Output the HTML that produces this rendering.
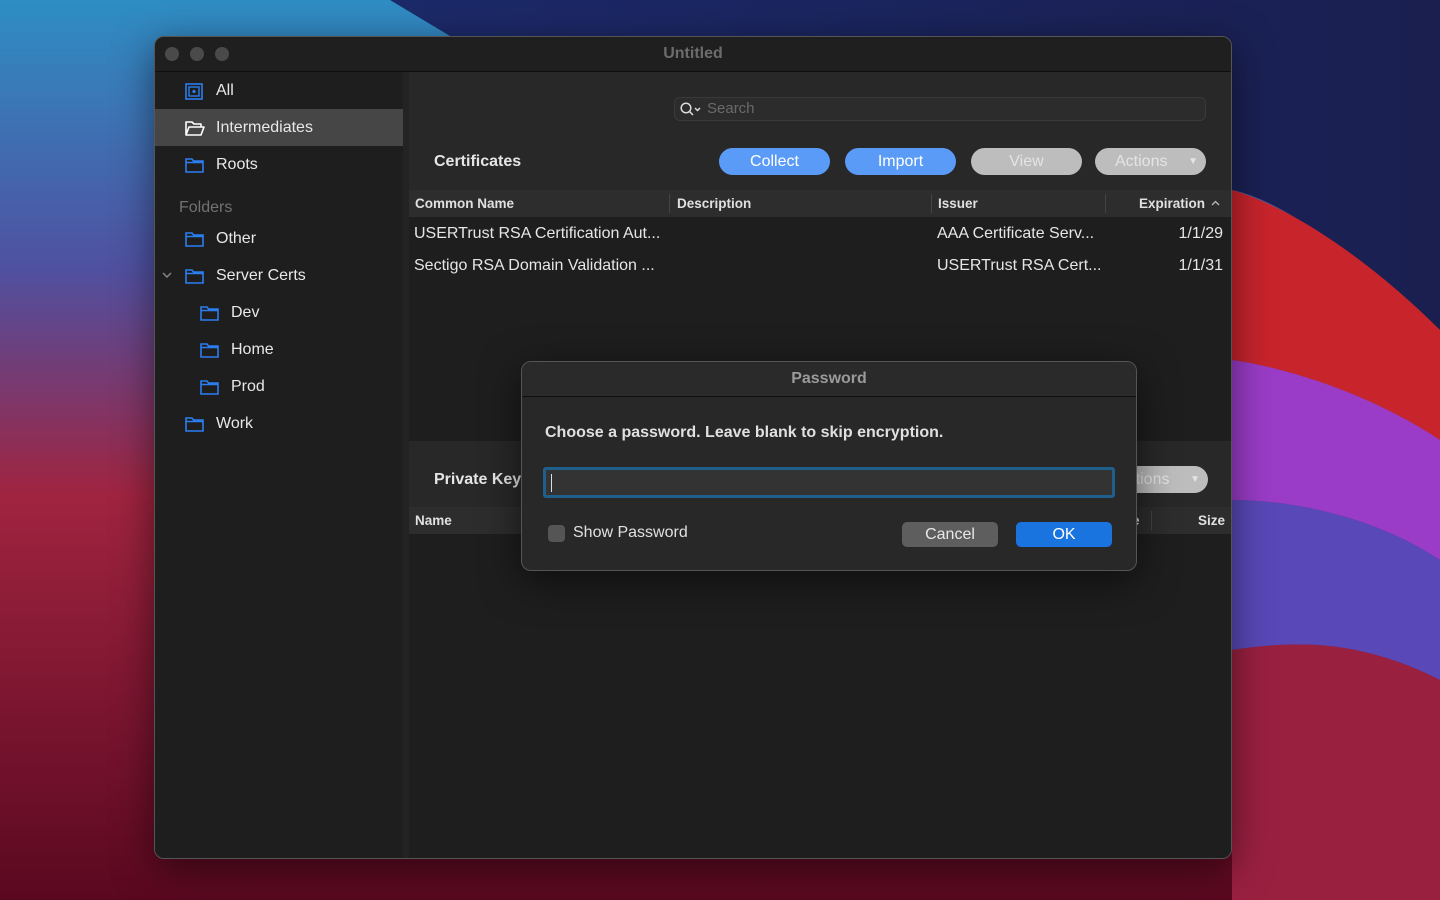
<!DOCTYPE html>
<html><head><meta charset="utf-8"><style>
*{box-sizing:border-box;margin:0;padding:0}
body{width:1440px;height:900px;overflow:hidden;position:relative;font-family:"Liberation Sans",sans-serif;background:#5a1030}
.bg{position:absolute;left:0;top:0}
.win{position:absolute;left:154px;top:36px;width:1078px;height:823px;border-radius:10px;overflow:hidden;background:#262626;border:1px solid #555;box-shadow:0 10px 40px rgba(0,0,0,.5)}
.title{position:absolute;left:0;top:0;width:100%;height:35px;background:#1f1f1f;border-bottom:1px solid #0e0e0e;text-align:center;color:#6c6c6c;font-weight:bold;font-size:16px;line-height:34px}
.dot{position:absolute;top:10px;width:14px;height:14px;border-radius:50%;background:#4a4a4a}
.side{position:absolute;left:0;top:35px;width:248px;bottom:0;background:#1e1e1e}
.item{position:absolute;left:0;width:248px;height:37px;color:#e8e8e8;font-size:16px;line-height:37px}
.item svg{position:absolute;top:11px}
.sel{background:#464646}
.main{position:absolute;left:248px;top:35px;right:0;bottom:0;background:#282828;border-left:6px solid #232323}
.tbl{position:absolute;left:0;right:0;background:#1e1e1e}
.hdr{position:absolute;left:0;right:0;height:27px;background:#2d2d2d;color:#e0e0e0;font-size:13.5px;font-weight:bold;line-height:27px}
.hdr span{position:absolute;top:0}
.sep{position:absolute;top:4px;width:1px;height:19px;background:#444}
.row{position:absolute;color:#e6e6e6;font-size:16px}
.btn{position:absolute;height:27px;border-radius:14px;text-align:center;font-size:16px;line-height:27px}
.blue{background:#5b9bf8;color:#fff}
.gray{background:#bdbdbd;color:#e4e4e4}
.dlg{position:absolute;left:521px;top:361px;width:616px;height:210px;background:#282828;border:1px solid #555;border-radius:10px;box-shadow:0 10px 40px rgba(0,0,0,.55);overflow:hidden}
.dt{height:35px;border-bottom:1px solid #0f0f0f;background:#2a2a2a;text-align:center;color:#9a9a9a;font-weight:bold;font-size:16px;line-height:33px}
</style></head><body>
<svg class="bg" width="1440" height="900" viewBox="0 0 1440 900">
<defs>
<linearGradient id="l" x1="0" y1="0" x2="0" y2="1"><stop offset="0" stop-color="#2e8ec4"/><stop offset=".3" stop-color="#5050a0"/><stop offset=".55" stop-color="#a02440"/><stop offset="1" stop-color="#5a0820"/></linearGradient>
<linearGradient id="t" x1="0" y1="0" x2="1" y2="0"><stop offset="0" stop-color="#1c2a6a"/><stop offset="1" stop-color="#1a1f50"/></linearGradient>
</defs>
<rect width="1440" height="900" fill="url(#l)"/>
<path d="M390 0 L1440 0 L1440 330 C1350 250 1280 200 1232 190 L450 36Z" fill="url(#t)"/>
<path d="M1232 190 C1300 210 1380 270 1440 330 L1440 440 C1380 400 1300 370 1232 360Z" fill="#c8242c"/>
<path d="M1232 360 C1300 370 1380 400 1440 440 L1440 560 C1380 520 1300 500 1232 500Z" fill="#9a3cc8"/>
<path d="M1232 500 C1300 500 1380 520 1440 560 L1440 680 C1360 640 1300 640 1232 650Z" fill="#5848b8"/>
<path d="M1232 650 C1300 640 1360 640 1440 680 L1440 900 L1232 900Z" fill="#9a2040"/>
</svg>
<div class="win">
 <div class="title">Untitled
  <div class="dot" style="left:10px"></div><div class="dot" style="left:35px"></div><div class="dot" style="left:60px"></div>
 </div>
 <div class="side">
  <div class="item" style="top:0"><svg style="left:30px" width="18" height="17" viewBox="0 0 18 17"><rect x="1" y="1" width="16" height="15" fill="none" stroke="#2a7ef0" stroke-width="1.6"/><rect x="4" y="4" width="10" height="9" fill="none" stroke="#2a7ef0" stroke-width="1.4"/><circle cx="9" cy="8.5" r="1.6" fill="#2a7ef0"/></svg><span style="position:absolute;left:61px">All</span></div>
  <div class="item sel" style="top:37px"><svg style="left:30px" width="20" height="17" viewBox="0 0 20 17"><path d="M1 15V2h6l2 2h7v3M1 15l3-8h15l-3 8Z" fill="none" stroke="#fff" stroke-width="1.6" stroke-linejoin="round"/></svg><span style="position:absolute;left:61px">Intermediates</span></div>
  <div class="item" style="top:74px"><svg style="left:30px" width="19" height="16" viewBox="0 0 19 16"><path d="M1 2h6l1.5 2H18v11H1Z M1 5.5h17" fill="none" stroke="#2a7ef0" stroke-width="1.6"/></svg><span style="position:absolute;left:61px">Roots</span></div>
  <div class="item" style="top:117px;color:#727272"><span style="position:absolute;left:24px">Folders</span></div>
  <div class="item" style="top:148px"><svg style="left:30px" width="19" height="16" viewBox="0 0 19 16"><path d="M1 2h6l1.5 2H18v11H1Z M1 5.5h17" fill="none" stroke="#2a7ef0" stroke-width="1.6"/></svg><span style="position:absolute;left:61px">Other</span></div>
  <div class="item" style="top:185px"><svg style="position:absolute;left:7px;top:15px" width="10" height="7" viewBox="0 0 10 7"><path d="M1 1l4 4 4-4" fill="none" stroke="#8a8a8a" stroke-width="1.4"/></svg><svg style="left:30px" width="19" height="16" viewBox="0 0 19 16"><path d="M1 2h6l1.5 2H18v11H1Z M1 5.5h17" fill="none" stroke="#2a7ef0" stroke-width="1.6"/></svg><span style="position:absolute;left:61px">Server Certs</span></div>
  <div class="item" style="top:222px"><svg style="left:45px" width="19" height="16" viewBox="0 0 19 16"><path d="M1 2h6l1.5 2H18v11H1Z M1 5.5h17" fill="none" stroke="#2a7ef0" stroke-width="1.6"/></svg><span style="position:absolute;left:76px">Dev</span></div>
  <div class="item" style="top:259px"><svg style="left:45px" width="19" height="16" viewBox="0 0 19 16"><path d="M1 2h6l1.5 2H18v11H1Z M1 5.5h17" fill="none" stroke="#2a7ef0" stroke-width="1.6"/></svg><span style="position:absolute;left:76px">Home</span></div>
  <div class="item" style="top:296px"><svg style="left:45px" width="19" height="16" viewBox="0 0 19 16"><path d="M1 2h6l1.5 2H18v11H1Z M1 5.5h17" fill="none" stroke="#2a7ef0" stroke-width="1.6"/></svg><span style="position:absolute;left:76px">Prod</span></div>
  <div class="item" style="top:333px"><svg style="left:30px" width="19" height="16" viewBox="0 0 19 16"><path d="M1 2h6l1.5 2H18v11H1Z M1 5.5h17" fill="none" stroke="#2a7ef0" stroke-width="1.6"/></svg><span style="position:absolute;left:61px">Work</span></div>
 </div>
 <div class="main">
  <div style="position:absolute;left:265px;top:25px;width:532px;height:24px;border:1px solid #3a3a3a;border-radius:6px;background:#2c2c2c;color:#6a6a6a;font-size:15px;line-height:22px;padding-left:32px">
   <svg style="position:absolute;left:5px;top:4px" width="22" height="15" viewBox="0 0 22 15"><circle cx="6" cy="6" r="4.8" fill="none" stroke="#ddd" stroke-width="1.5"/><path d="M9.5 9.5L13 13M15 6l2.5 2.5L20 6" fill="none" stroke="#ddd" stroke-width="1.5"/></svg>Search</div>
  <div style="position:absolute;left:25px;top:80px;color:#e6e6e6;font-weight:bold;font-size:16px;line-height:20px">Certificates</div>
  <div class="btn blue" style="left:310px;top:76px;width:111px">Collect</div>
  <div class="btn blue" style="left:436px;top:76px;width:111px">Import</div>
  <div class="btn gray" style="left:562px;top:76px;width:111px">View</div>
  <div class="btn gray" style="left:686px;top:76px;width:111px;text-align:left;padding-left:20px">Actions<span style="position:absolute;right:8px;top:0;font-size:10px">&#9660;</span></div>
  <div class="tbl" style="top:145px;height:224px"></div>
  <div class="hdr" style="top:118px">
   <span style="left:6px">Common Name</span><div class="sep" style="left:260px"></div>
   <span style="left:268px">Description</span><div class="sep" style="left:522px"></div>
   <span style="left:529px">Issuer</span><div class="sep" style="left:696px"></div>
   <span style="right:26px">Expiration</span><svg style="position:absolute;right:11px;top:10px" width="9" height="6" viewBox="0 0 9 6"><path d="M1 5l3.5-3.5L8 5" fill="none" stroke="#bbb" stroke-width="1.3"/></svg>
  </div>
  <div class="row" style="left:5px;top:153px">USERTrust RSA Certification Aut...</div>
  <div class="row" style="left:528px;top:153px">AAA Certificate Serv...</div>
  <div class="row" style="right:8px;top:153px">1/1/29</div>
  <div class="row" style="left:5px;top:185px">Sectigo RSA Domain Validation ...</div>
  <div class="row" style="left:528px;top:185px">USERTrust RSA Cert...</div>
  <div class="row" style="right:8px;top:185px">1/1/31</div>
  <div style="position:absolute;left:25px;top:398px;color:#e6e6e6;font-weight:bold;font-size:16px;line-height:20px">Private Keys</div>
  <div class="btn gray" style="left:688px;top:394px;width:111px;text-align:left;padding-left:20px">Actions<span style="position:absolute;right:8px;top:0;font-size:10px">&#9660;</span></div>
  <div class="tbl" style="top:462px;bottom:0"></div>
  <div class="hdr" style="top:435px"><span style="left:6px">Name</span><span style="left:700px">Type</span><div class="sep" style="left:742px"></div><span style="right:6px">Size</span></div>
 </div>
</div>
<div class="dlg">
 <div class="dt">Password</div>
 <div style="position:absolute;left:23px;top:62px;color:#e0e0e0;font-weight:bold;font-size:16px">Choose a password. Leave blank to skip encryption.</div>
 <div style="position:absolute;left:21px;top:105px;width:572px;height:31px;border:3px solid #1f5f8c;border-radius:3px;background:#333"><div style="position:absolute;left:5px;top:4px;width:1px;height:18px;background:#ddd"></div></div>
 <div style="position:absolute;left:26px;top:163px;width:17px;height:17px;border-radius:4px;background:#555"></div>
 <div style="position:absolute;left:51px;top:162px;color:#e0e0e0;font-size:16px">Show Password</div>
 <div style="position:absolute;left:380px;top:160px;width:96px;height:25px;border-radius:5px;background:#5e5e5e;color:#e8e8e8;text-align:center;font-size:16px;line-height:25px">Cancel</div>
 <div style="position:absolute;left:494px;top:160px;width:96px;height:25px;border-radius:5px;background:#1a74e0;color:#fff;text-align:center;font-size:16px;line-height:25px">OK</div>
</div>
</body></html>
